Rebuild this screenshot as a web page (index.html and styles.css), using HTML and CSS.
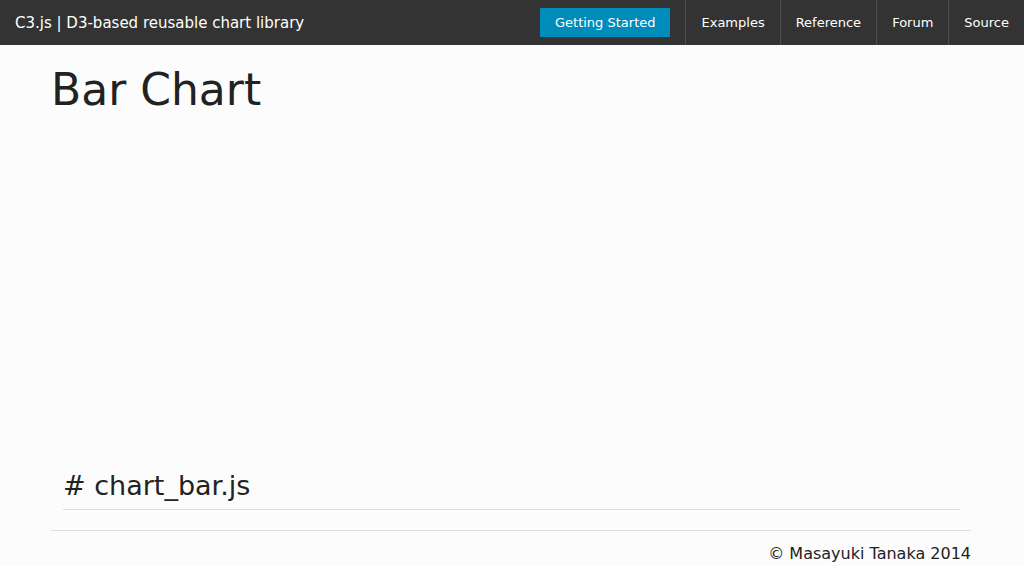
FILE: index.html
```html
<!DOCTYPE html>
<html>
<head>
<meta charset="utf-8">
<title>C3.js | Bar Chart</title>
<link rel="stylesheet" href="styles.css">
</head>
<body>
<header class="topbar">
  <div class="brand">C3.js | D3-based reusable chart library</div>
  <nav class="nav">
    <a class="btn-start" href="#">Getting Started</a>
    <a class="nav-link" href="#">Examples</a>
    <a class="nav-link" href="#">Reference</a>
    <a class="nav-link" href="#">Forum</a>
    <a class="nav-link" href="#">Source</a>
  </nav>
</header>
<main class="page">
  <h1 class="title">Bar Chart</h1>
  <div class="chart"></div>
  <div class="code-block">
    <h3 class="code-title"># chart_bar.js</h3>
  </div>
  <footer class="footer">© Masayuki Tanaka 2014</footer>
</main>
</body>
</html>
```
FILE: styles.css
```css
* { box-sizing: border-box; }
html, body { margin: 0; padding: 0; }
body {
  background: #fcfcfc;
  color: #222;
  font-family: "DejaVu Sans", sans-serif;
}
.topbar {
  height: 45px;
  background: #333;
  display: flex;
  align-items: center;
  justify-content: space-between;
}
.brand {
  color: #fff;
  font-size: 15px;
  padding-left: 15px;
}
.nav {
  display: flex;
  align-items: stretch;
  height: 45px;
}
.nav a { text-decoration: none; color: #fff; font-size: 13px; }
.btn-start {
  align-self: center;
  background: #008cba;
  height: 29px;
  line-height: 29px;
  padding: 0 15px;
  margin-right: 15px;
}
.nav-link {
  display: flex;
  align-items: center;
  padding: 0 15px;
  border-left: 1px solid #4e4e4e;
}
.page {
  margin: 0 52px 0 51px;
  padding-right: 1px;
}
.title {
  font-size: 44px;
  font-weight: normal;
  margin: 0;
  padding-top: 15px;
  line-height: 60px;
  color: #222;
}
.chart { height: 346px; }
.code-block { padding: 0 11px 0 12px; }
.code-title {
  font-size: 27px;
  font-weight: normal;
  margin: 0;
  line-height: 40px;
  padding-bottom: 3px;
  border-bottom: 1px solid #ddd;
}
.footer {
  margin-top: 20px;
  border-top: 1px solid #ddd;
  text-align: right;
  font-size: 16px;
  padding-top: 11px;
  line-height: 24px;
}
```
